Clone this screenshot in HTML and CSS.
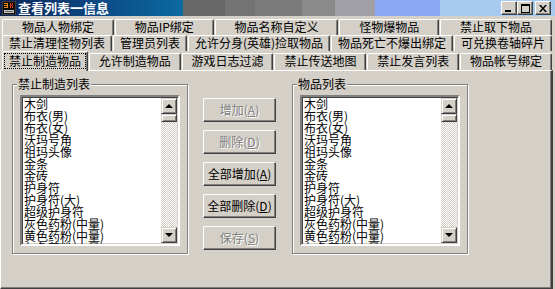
FILE: index.html
```html
<!DOCTYPE html>
<html lang="zh-CN">
<head>
<meta charset="utf-8">
<title>查看列表一信息</title>
<link rel="stylesheet" href="styles.css">
</head>
<body>
<div class="window">
  <div class="titlebar">
    <svg class="app-icon" width="14" height="14" viewBox="0 0 14 14">
      <rect x="0" y="0" width="14" height="14" fill="#3a3a3a"/>
      <rect x="1" y="1" width="12" height="12" fill="#0c0c0c"/>
      <rect x="2" y="2" width="4" height="1" fill="#f08a20"/>
      <rect x="5" y="3" width="1" height="4" fill="#f08a20"/>
      <rect x="2" y="4" width="3" height="1" fill="#f08a20"/>
      <rect x="2" y="6" width="4" height="1" fill="#f08a20"/>
      <rect x="8" y="2" width="1" height="5" fill="#e04020"/>
      <rect x="9" y="4" width="1" height="1" fill="#e04020"/>
      <rect x="10" y="2" width="1" height="2" fill="#e04020"/>
      <rect x="10" y="5" width="1" height="2" fill="#e04020"/>
      <rect x="2" y="9" width="10" height="3" fill="#c8c8c8"/>
      <rect x="3" y="10" width="8" height="1" fill="#606060"/>
    </svg>
    <span class="title">查看列表一信息</span>
    <div class="caption-buttons">
      <div class="cap"><span class="g-min"></span></div>
      <div class="cap"><span class="g-max"></span></div>
      <div class="cap cap-close">
        <svg width="8" height="7" viewBox="0 0 8 7"><path d="M0 0h2l2 2.5L6 0h2L5 3.5 8 7H6L4 4.5 2 7H0l3-3.5z" fill="#000"/></svg>
      </div>
    </div>
  </div>

  <div class="tabs">
    <div class="tab-row">
      <div class="tab">物品人物绑定</div>
      <div class="tab">物品IP绑定</div>
      <div class="tab">物品名称自定义</div>
      <div class="tab">怪物爆物品</div>
      <div class="tab">禁止取下物品</div>
    </div>
    <div class="tab-row">
      <div class="tab">禁止清理怪物列表</div>
      <div class="tab">管理员列表</div>
      <div class="tab">允许分身(英雄)捡取物品</div>
      <div class="tab">物品死亡不爆出绑定</div>
      <div class="tab">可兑换卷轴碎片</div>
    </div>
    <div class="tab-row tab-row-front">
      <div class="tab tab-active"><span class="focus">禁止制造物品</span></div>
      <div class="tab">允许制造物品</div>
      <div class="tab">游戏日志过滤</div>
      <div class="tab">禁止传送地图</div>
      <div class="tab">禁止发言列表</div>
      <div class="tab">物品帐号绑定</div>
    </div>
  </div>

  <div class="panel">
    <div class="content">
      <fieldset class="group">
        <legend>禁止制造列表</legend>
        <div class="listbox">
          <div class="items">
            <div>木剑</div>
            <div>布衣(男)</div>
            <div>布衣(女)</div>
            <div>沃玛号角</div>
            <div>祖玛头像</div>
            <div>金条</div>
            <div>金砖</div>
            <div>护身符</div>
            <div>护身符(大)</div>
            <div>超级护身符</div>
            <div>灰色药粉(中量)</div>
            <div>黄色药粉(中量)</div>
            <div>灰色药粉(大量)</div>
          </div>
          <div class="scrollbar">
            <div class="sb-btn"><span class="arrow-up"></span></div>
            <div class="sb-thumb"></div>
            <div class="sb-track"></div>
            <div class="sb-btn"><span class="arrow-down"></span></div>
          </div>
        </div>
      </fieldset>

      <div class="btn-col">
        <div class="btn disabled">增加(<u>A</u>)</div>
        <div class="btn disabled">删除(<u>D</u>)</div>
        <div class="btn">全部增加(<u>A</u>)</div>
        <div class="btn">全部删除(<u>D</u>)</div>
        <div class="btn disabled">保存(<u>S</u>)</div>
      </div>

      <fieldset class="group">
        <legend>物品列表</legend>
        <div class="listbox">
          <div class="items">
            <div>木剑</div>
            <div>布衣(男)</div>
            <div>布衣(女)</div>
            <div>沃玛号角</div>
            <div>祖玛头像</div>
            <div>金条</div>
            <div>金砖</div>
            <div>护身符</div>
            <div>护身符(大)</div>
            <div>超级护身符</div>
            <div>灰色药粉(中量)</div>
            <div>黄色药粉(中量)</div>
            <div>灰色药粉(大量)</div>
          </div>
          <div class="scrollbar">
            <div class="sb-btn"><span class="arrow-up"></span></div>
            <div class="sb-thumb"></div>
            <div class="sb-track"></div>
            <div class="sb-btn"><span class="arrow-down"></span></div>
          </div>
        </div>
      </fieldset>
    </div>
  </div>
</div>
</body>
</html>
```

FILE: styles.css
```css
* { box-sizing: border-box; }

html, body {
  margin: 0;
  padding: 0;
  background: #d4d0c8;
}

body {
  font-family: "Noto Sans CJK SC", "Noto Sans", sans-serif;
  font-size: 12px;
  color: #000;
  width: 555px;
  height: 289px;
  overflow: hidden;
}

.window {
  width: 555px;
  height: 289px;
  display: flex;
  flex-direction: column;
}

/* ---------- title bar ---------- */
.titlebar {
  height: 16px;
  flex: none;
  display: flex;
  align-items: center;
  padding-left: 2px;
  background: linear-gradient(to right,
    #0a2456 0px, #0b4a86 100px, #0b6aa0 183px,
    #686868 183px, #686868 225px,
    #737373 225px, #737373 255px,
    #7b7b7b 255px, #7b7b7b 302px,
    #8a8a8a 302px, #8a8a8a 335px,
    #a0a0a6 335px, #a0a0a6 375px,
    #8aa8f6 375px, #8aa8f6 440px,
    #a6caf0 440px);
}

.app-icon {
  display: block;
  flex: none;
}

.title {
  margin-left: 2px;
  color: #fff;
  font-weight: bold;
  font-size: 13px;
  line-height: 16px;
  white-space: nowrap;
}

.caption-buttons {
  margin-left: auto;
  display: flex;
  padding-right: 4px;
}

.cap {
  width: 16px;
  height: 14px;
  background: #d4d0c8;
  border: 1px solid;
  border-color: #fff #404040 #404040 #fff;
  box-shadow: inset -1px -1px 0 #808080;
  position: relative;
  display: flex;
  align-items: center;
  justify-content: center;
}

.cap-close { margin-left: 2px; }

.g-min {
  position: absolute;
  left: 3px;
  bottom: 2px;
  width: 6px;
  height: 2px;
  background: #000;
}

.g-max {
  width: 9px;
  height: 9px;
  border: 1px solid #000;
  border-top-width: 2px;
}

/* ---------- tabs ---------- */
.tabs {
  margin-top: 3px;
  flex: none;
}

.tab-row {
  display: flex;
  gap: 1px;
  height: 16px;
  padding: 0 3px 0 2px;
}

.tab {
  flex: 1 1 auto;
  padding: 0 5px;
  background: #d4d0c8;
  border-top: 1px solid #fff;
  border-left: 1px solid #fff;
  border-right: 1px solid #404040;
  box-shadow: inset -1px 0 0 #808080;
  border-radius: 2px 2px 0 0;
  text-align: center;
  line-height: 14px;
  white-space: nowrap;
}

.tab-row-front {
  height: 19px;
  padding-top: 2px;
}

.tab-active {
  margin-top: -2px;
  margin-bottom: -1px;
  position: relative;
  z-index: 1;
  padding: 1px 1px 0;
}

.focus {
  display: block;
  border: 1px dotted #000;
  line-height: 14px;
}

/* ---------- panel ---------- */
.panel {
  width: 553px;
  flex: 1;
  border-top: 1px solid #fff;
  border-left: 1px solid #fff;
  border-right: 2px solid #404040;
  border-bottom: 1px solid #404040;
  box-shadow: inset -1px -1px 0 #808080;
}

.content {
  display: flex;
  align-items: flex-start;
  padding: 7px 0 0 11px;
}

.group {
  width: 176px;
  margin: 0;
  padding: 5px 6px 7px 7px;
  border: 1px solid #808080;
  box-shadow: 1px 1px 0 #fff, inset 1px 1px 0 #fff;
  min-width: 0;
}

.group legend {
  padding: 0 1px;
  margin-left: -3px;
  line-height: 12px;
  font-size: 12px;
  background: #d4d0c8;
}

.listbox {
  width: 160px;
  height: 151px;
  background: #fff;
  border: 2px solid;
  border-color: #808080 #fff #fff #808080;
  box-shadow: inset 1px 1px 0 #404040, inset -1px -1px 0 #d4d0c8;
  display: flex;
  overflow: hidden;
}

.items {
  flex: 1;
  padding: 1px 0 0 2px;
  line-height: 12px;
  font-size: 12px;
  white-space: nowrap;
  overflow: hidden;
}

.scrollbar {
  width: 16px;
  flex: none;
  display: flex;
  flex-direction: column;
  margin: 1px 1px 1px 0;
}

.sb-btn, .sb-thumb {
  background: #d4d0c8;
  border: 1px solid;
  border-color: #d4d0c8 #404040 #404040 #d4d0c8;
  box-shadow: inset 1px 1px 0 #fff, inset -1px -1px 0 #808080;
  display: flex;
  align-items: center;
  justify-content: center;
}

.sb-btn { height: 16px; flex: none; }
.sb-thumb { height: 8px; flex: none; }

.sb-track {
  flex: 1;
  background: repeating-conic-gradient(#fff 0 25%, #d4d0c8 0 50%) 0 0 / 2px 2px;
}

.arrow-up, .arrow-down {
  width: 0;
  height: 0;
  border-left: 4px solid transparent;
  border-right: 4px solid transparent;
}
.arrow-up { border-bottom: 4px solid #000; }
.arrow-down { border-top: 4px solid #000; }

/* ---------- buttons ---------- */
.btn-col {
  display: flex;
  flex-direction: column;
  gap: 8px;
  padding-top: 20px;
  margin: 0 16px 0 15px;
}

.btn {
  width: 73px;
  height: 24px;
  background: #d4d0c8;
  border: 1px solid;
  border-color: #fff #404040 #404040 #fff;
  box-shadow: inset -1px -1px 0 #808080;
  text-align: center;
  line-height: 21px;
  font-size: 12px;
  white-space: nowrap;
}

.btn.disabled {
  color: #808080;
  text-shadow: 1px 1px 0 #fff;
}
```
